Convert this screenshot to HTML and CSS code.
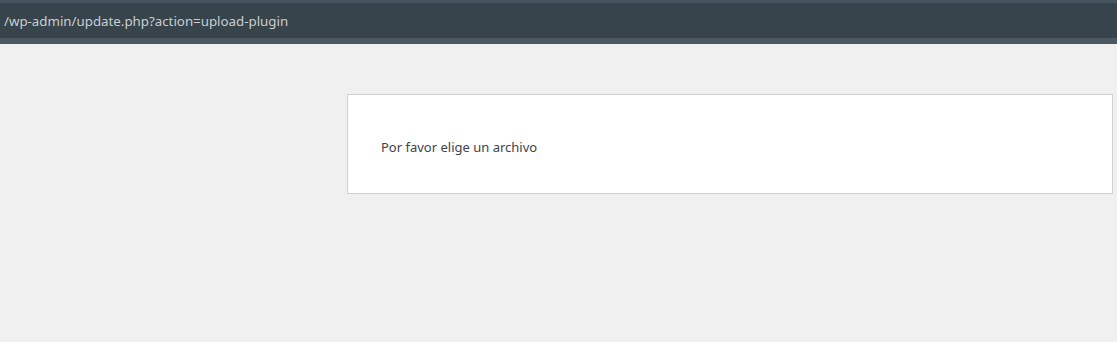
FILE: index.html
```html
<!DOCTYPE html>
<html>
<head>
	<title>Subir plugin</title>
	<link rel="stylesheet" href="styles.css">
</head>
<body>

	<!-- Barra de direcciones -->
	<div class="addressbar">
		<div class="url">/wp-admin/update.php?action=upload-plugin</div>
	</div>

	<div class="page">
		<div class="notice">
			<p>Por favor elige un archivo</p>
		</div>
	</div>

</body>
</html>
```

FILE: styles.css
```css
body {
	margin: 0;
	background-color: #f0f0f0;
	font-family: "Noto Sans", "Open Sans", sans-serif;
}

/* Barra superior */
.addressbar {
	height: 44px;
	box-sizing: border-box;
	background-color: #37444c;
	border-top: 3px solid #47555e;
	border-bottom: 6px solid #4a5962;
	overflow: hidden;
}

.url {
	padding: 8px 0 0 4px;
	font-size: 13.3px;
	line-height: 20px;
	color: #c9ced1;
	white-space: nowrap;
}

/* Contenido */
.page {
	padding: 50px 4px 0 347px;
}

.notice {
	background-color: #fff;
	border: 1px solid #cfd1d3;
	height: 100px;
	box-sizing: border-box;
	display: flex;
	align-items: center;
	padding: 5px 0 0 33px;
}

.notice p {
	margin: 0;
	font-size: 13px;
	color: #3c434a;
}
```
